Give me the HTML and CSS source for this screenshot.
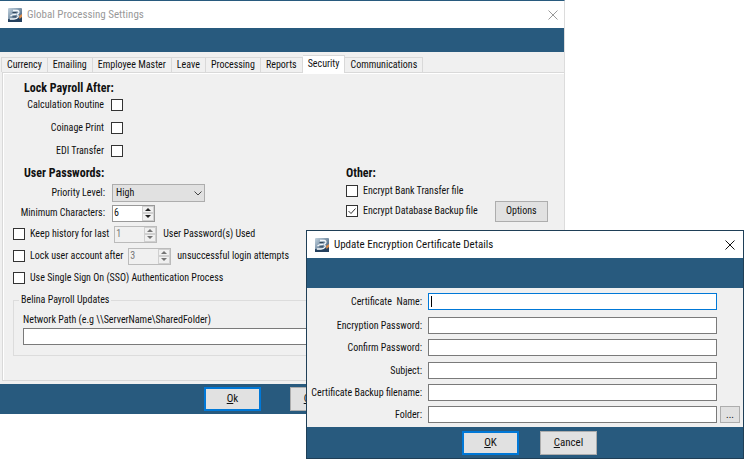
FILE: index.html
```html
<!DOCTYPE html>
<html lang="en">
<head>
<meta charset="utf-8">
<title>Global Processing Settings</title>
<link rel="stylesheet" href="styles.css">
</head>
<body>
<svg class="defs" aria-hidden="true">
  <defs>
    <linearGradient id="tile" x1="0" y1="0" x2="1" y2="1">
      <stop offset="0" stop-color="#c3d3df"/>
      <stop offset="0.5" stop-color="#7890a6"/>
      <stop offset="1" stop-color="#2a4666"/>
    </linearGradient>
    <symbol id="logo" viewBox="0 0 14 14">
      <rect width="14" height="14" rx="1" fill="url(#tile)"/>
      <path d="M0 11 Q7 13 14 8 V14 H0 Z" fill="#24405e"/>
      <path d="M11 8 L14 6 V9 L11.500 11 Z" fill="#d98a4a"/>
      <path d="M5 2.500 H9 Q11.400 2.800 10.800 4.800 Q10.300 6.200 8.500 6.500 Q10.800 7.200 10 9 Q9 11 6 11 H2" fill="none" stroke="#f4f7fa" stroke-width="1.300"/>
      <path d="M2.500 8 Q4 6.300 8 6.400" fill="none" stroke="#f4f7fa" stroke-width="1.200"/>
      <path d="M4.500 4.500 H8.500 M4.500 8.800 H8" stroke="#33475c"/>
    </symbol>
    <symbol id="cross" viewBox="0 0 10 10">
      <path d="M0.500 0.500 L9.500 9.500 M9.500 0.500 L0.500 9.500" fill="none" stroke="currentColor" stroke-width="1"/>
    </symbol>
  </defs>
</svg>

<main class="window settings">
  <header class="titlebar inactive">
    <svg class="logo"><use href="#logo"/></svg>
    <h1 class="title">Global Processing Settings</h1>
    <button class="close" type="button" aria-label="Close"><svg><use href="#cross"/></svg></button>
  </header>
  <div class="band"></div>

  <nav class="tabs" role="tablist">
    <button class="tab" type="button" role="tab">Currency</button>
    <button class="tab" type="button" role="tab">Emailing</button>
    <button class="tab" type="button" role="tab">Employee Master</button>
    <button class="tab" type="button" role="tab">Leave</button>
    <button class="tab" type="button" role="tab">Processing</button>
    <button class="tab" type="button" role="tab">Reports</button>
    <button class="tab active" type="button" role="tab" aria-selected="true">Security</button>
    <button class="tab" type="button" role="tab">Communications</button>
  </nav>

  <form class="panel">
    <section class="lock">
      <h2 class="heading">Lock Payroll After:</h2>
      <div class="pair"><label for="calc">Calculation Routine</label><input class="check" type="checkbox" id="calc"></div>
      <div class="pair"><label for="coin">Coinage Print</label><input class="check" type="checkbox" id="coin"></div>
      <div class="pair"><label for="edi">EDI Transfer</label><input class="check" type="checkbox" id="edi"></div>
    </section>

    <div class="columns">
      <section class="passwords">
        <h2 class="heading">User Passwords:</h2>
        <div class="field">
          <label for="level">Priority Level:</label>
          <span class="combo">
            <select id="level"><option>High</option></select>
            <svg class="chevron" viewBox="0 0 8 5"><path d="M0.500 0.500 L4 4 L7.500 0.500" fill="none" stroke="#444"/></svg>
          </span>
        </div>
        <div class="field">
          <label for="min">Minimum Characters:</label>
          <span class="spin">
            <input type="text" id="min" value="6">
            <button type="button" class="up" aria-label="More"></button>
            <button type="button" class="down" aria-label="Fewer"></button>
          </span>
        </div>
        <div class="option">
          <input class="check" type="checkbox" id="keep"><label for="keep">Keep history for last</label>
          <span class="spin disabled">
            <input type="text" value="1" aria-label="Passwords kept" disabled>
            <button type="button" class="up" aria-label="More" disabled></button>
            <button type="button" class="down" aria-label="Fewer" disabled></button>
          </span>
          <span class="suffix">User Password(s) Used</span>
        </div>
        <div class="option">
          <input class="check" type="checkbox" id="lockout"><label for="lockout">Lock user account after</label>
          <span class="spin disabled">
            <input type="text" value="3" aria-label="Login attempts" disabled>
            <button type="button" class="up" aria-label="More" disabled></button>
            <button type="button" class="down" aria-label="Fewer" disabled></button>
          </span>
          <span class="suffix">unsuccessful login attempts</span>
        </div>
        <div class="option">
          <input class="check" type="checkbox" id="sso"><label for="sso">Use Single Sign On (SSO) Authentication Process</label>
        </div>
      </section>

      <section class="other">
        <h2 class="heading">Other:</h2>
        <div class="choice"><input class="check" type="checkbox" id="bank"><label for="bank">Encrypt Bank Transfer file</label></div>
        <div class="choice">
          <input class="check" type="checkbox" id="backup" checked><label for="backup">Encrypt Database Backup file</label>
          <button class="btn options" type="button">Options</button>
        </div>
      </section>
    </div>

    <fieldset class="group">
      <legend>Belina Payroll Updates</legend>
      <label for="path">Network Path (e.g \\ServerName\SharedFolder)</label>
      <input class="text" type="text" id="path">
    </fieldset>
  </form>

  <footer class="actions">
    <button class="btn primary" type="button"><u>O</u>k</button>
    <button class="btn" type="button"><u>C</u>ancel</button>
  </footer>
</main>

<div class="window dialog" role="dialog" aria-labelledby="dialog-title">
  <header class="titlebar">
    <svg class="logo"><use href="#logo"/></svg>
    <h1 class="title" id="dialog-title">Update Encryption Certificate Details</h1>
    <button class="close" type="button" aria-label="Close"><svg><use href="#cross"/></svg></button>
  </header>
  <div class="band"></div>
  <form class="certificate">
    <label for="name">Certificate&nbsp; Name:</label>
    <span class="entry focused"><input class="text" type="text" id="name"><i class="caret"></i></span>
    <label for="pass">Encryption Password:</label>
    <input class="text" type="text" id="pass">
    <label for="confirm">Confirm Password:</label>
    <input class="text" type="text" id="confirm">
    <label for="subject">Subject:</label>
    <input class="text" type="text" id="subject">
    <label for="file">Certificate Backup filename:</label>
    <input class="text" type="text" id="file">
    <label for="folder">Folder:</label>
    <input class="text" type="text" id="folder">
    <button class="btn browse" type="button">...</button>
  </form>
  <footer class="actions">
    <button class="btn primary" type="button"><u>O</u>K</button>
    <button class="btn" type="button"><u>C</u>ancel</button>
  </footer>
</div>
</body>
</html>
```
FILE: styles.css
```css
* { box-sizing: border-box; }

body {
  margin: 0;
  min-height: 100vh;
  position: relative;
  background: #fff;
  color: #111;
  font: 10px/14px "Roboto Condensed", Roboto, sans-serif;
}

button, input, select { font: inherit; color: inherit; margin: 0; padding: 0; }
label, .suffix, .tab, .heading, .title, legend { white-space: nowrap; }
h1, h2 { margin: 0; }

.defs { position: absolute; width: 0; height: 0; }

.window { background: #f0f0f0; }
.settings { width: 76%; border-top: 1px solid #285a7e; border-right: 1px solid #dcdcdc; }

.titlebar { display: flex; align-items: center; height: 27px; padding: 0 8px; background: #fff; }
.logo { width: 14px; height: 14px; }
.title { flex: 1; margin-left: 5px; font-size: 11px; line-height: 16px; font-weight: normal; color: #111; }
.inactive .title { color: #999; }
.close { display: flex; border: 0; background: none; color: #111; }
.close svg { width: 10px; height: 10px; }
.inactive .close { color: #999; }
.settings .titlebar { padding-right: 6px; }

.band { height: 24px; background: #285a7e; }

.tabs { display: flex; align-items: flex-end; height: 20px; padding-left: 1px; }
.tab { height: 15px; padding: 0 5px; border: 1px solid #d9d9d9; border-width: 1px 1px 0 0; background: #f0f0f0; }
.tab:first-child { border-left-width: 1px; }
.tab.active { height: 18px; margin-bottom: -1px; padding-bottom: 2px; background: #fff; position: relative; }

.panel { height: 309px; margin-left: 2px; padding: 8px 0 0 10px; border: 1px solid #d9d9d9; border-right-width: 0; box-shadow: inset 1px 1px #fff; }
.heading { font-size: 12px; line-height: 14px; font-weight: bold; margin-left: 11px; }

.check { appearance: none; width: 12px; height: 12px; flex: none; border: 1px solid #333; background: #fff; }
.check:checked { background: #fff url("data:image/svg+xml,%3Csvg xmlns='http://www.w3.org/2000/svg' viewBox='0 0 10 10'%3E%3Cpath d='M1.500 5L4 7.500L8.500 2.500' fill='none' stroke='%23333'/%3E%3C/svg%3E"); }

.pair { display: flex; justify-content: flex-end; align-items: center; gap: 7px; width: 110px; height: 23px; }
.lock .heading { margin-bottom: -2px; }

.columns { display: grid; grid-template-columns: 333px 1fr; margin-top: 4px; }

.field { display: flex; align-items: center; gap: 7px; height: 20px; }
.field label { width: 92px; text-align: right; }
.passwords .heading { margin-bottom: 3px; }
.other .heading { margin: 0 0 1px; }
.combo { position: relative; display: block; width: 93px; height: 18px; }
.combo select { appearance: none; width: 100%; height: 100%; padding-left: 3px; border: 1px solid #adadad; border-radius: 0; background: #e1e1e1; }
.chevron { position: absolute; right: 3px; top: 7px; width: 8px; height: 5px; }

.spin { display: grid; grid-template: 1fr 1fr / 1fr 12px; width: 43px; height: 17px; border: 1px solid #999; background: #fff; }
.spin input { grid-row: 1 / 3; width: 100%; min-width: 0; padding-left: 1px; border: 0; background: none; }
.spin button { grid-column: 2; display: grid; place-items: center; border: 1px solid #d0d0d0; background: #f0f0f0; }
.spin button::before { content: ""; border: solid transparent; border-width: 0 3px; }
.spin .up::before { border-bottom: 3px solid #222; }
.spin .down::before { border-top: 3px solid #222; }
.spin.disabled { border-color: #bbb; background: #f0f0f0; color: #777; }
.spin.disabled button::before { opacity: 0.6; }

.option { display: flex; align-items: center; height: 22px; }
.option label { margin: 0 5px; }
.suffix { margin-left: 6px; }

.choice { display: flex; align-items: center; gap: 5px; height: 20px; }
.btn { border: 1px solid #adadad; background: #e1e1e1; color: #111; }
.options { width: 53px; height: 21px; margin-left: 12px; }

.group { display: flex; flex-direction: column; gap: 1px; margin: 4px 8px 0 0; padding: 6px 9px 10px; border: 1px solid #dcdcdc; }
.group legend { padding: 0 2px; margin-left: -4px; }
.text { width: 100%; height: 17px; padding: 0 2px; border: 1px solid #7a7a7a; border-radius: 0; background: #fff; outline: 0; }

.actions { display: flex; background: #285a7e; }
.actions .btn { width: 57px; height: 24px; font-size: 11px; }
.actions .primary { border: 2px solid #0078d7; }
.settings .actions { gap: 29px; margin-top: 3px; padding: 3px 0 3px 204px; }

.dialog { position: absolute; top: 230px; left: 306px; right: 0; border: 1px solid #1f3f57; }
.dialog .band { height: 30px; }
.certificate { display: grid; grid-template-columns: 116px 1fr 20px; grid-template-rows: 24px 22px 23px 22px 22px 17px; column-gap: 3px; padding: 5px 3px 4px 2px; }
.certificate label { grid-column: 1; padding-right: 3px; text-align: right; line-height: 17px; }
.certificate .btn { height: 17px; line-height: 10px; }
.entry { position: relative; display: block; height: 17px; }
.focused .text { border-color: #0078d7; }
.caret { position: absolute; left: 3px; top: 3px; width: 1px; height: 11px; background: #000; }
.dialog .actions { gap: 21px; padding: 4px 0 3px 155px; }
```
